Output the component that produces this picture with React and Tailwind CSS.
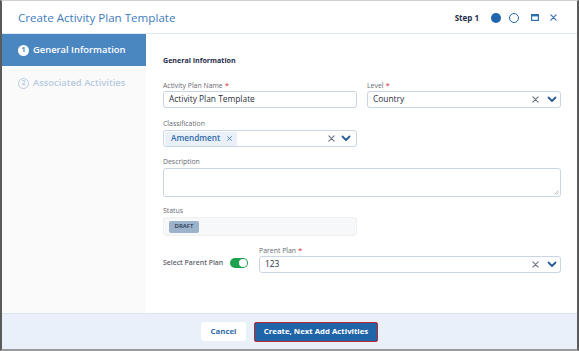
function Chevron() {
  return (
    <svg width="10" height="7" viewBox="0 0 10 7" fill="none">
      <path d="M1.5 1.5 L5 5 L8.5 1.5" stroke="#2b5c96" strokeWidth="1.8" strokeLinecap="round" strokeLinejoin="round" />
    </svg>
  );
}

function Cross({ size = 7, color = "#6b7280" }) {
  return (
    <svg width={size} height={size} viewBox="0 0 8 8" fill="none">
      <path d="M1 1 L7 7 M7 1 L1 7" stroke={color} strokeWidth="1.3" strokeLinecap="round" />
    </svg>
  );
}

function Label({ children, required }) {
  return (
    <div className="text-[6.9px] leading-[9px] text-[#666a71]">
      {children}
      {required && <span className="text-[#e0303a] ml-[2px] text-[8px]">*</span>}
    </div>
  );
}

function SelectBox({ value, className = "" }) {
  return (
    <div className={"h-[17px] border border-[#c9d4e4] rounded-[3px] bg-white flex items-center pl-[5px] pr-[3px] " + className}>
      <div className="flex-1 flex items-center text-[8.4px] text-[#2a2f3a]">{value}</div>
      <div className="flex items-center gap-[8px]">
        <Cross />
        <Chevron />
      </div>
    </div>
  );
}

export default function App() {
  return (
    <div
      className="w-[579px] h-[351px] bg-white flex flex-col border-l-2 border-r-2 border-b-2 border-t border-l-[#5a5a5a] border-r-[#5a5a5a] border-b-[#9a9a9a] border-t-[#d0d0d0] overflow-hidden"
      style={{ fontFamily: '"Open Sans", "Noto Sans", sans-serif' }}
    >
      {/* header */}
      <div className="h-[33px] flex items-center border-b border-[#dfe8f3] pl-[16px] pr-[20px] pt-[1px]">
        <div className="flex-1 text-[11.6px] text-[#3f7dbd]">Create Activity Plan Template</div>
        <div className="flex items-center">
          <span className="text-[8px] font-bold text-[#1f2d4a] mr-[12px]">Step 1</span>
          <span className="w-[10px] h-[10px] rounded-full bg-[#1f66ad] mr-[8px]" />
          <span className="w-[10px] h-[10px] rounded-full border border-[#1f66ad] mr-[12px]" />
          <svg width="8" height="7" viewBox="0 0 8 7" className="mr-[11px]">
            <rect x="0.6" y="0.6" width="6.8" height="5.8" fill="none" stroke="#2f6fb0" strokeWidth="1.2" />
            <rect x="0.6" y="0.6" width="6.8" height="1.8" fill="#2f6fb0" />
          </svg>
          <Cross size={7} color="#2f6fb0" />
        </div>
      </div>

      <div className="flex flex-1 min-h-0">
        {/* sidebar */}
        <div className="w-[144px] bg-[#fafafa] flex flex-col">
          <div className="h-[32px] bg-[#4a87c1] flex items-center pl-[16px] text-white">
            <span className="w-[11px] h-[11px] rounded-full bg-white text-[#4a87c1] text-[7px] font-bold flex items-center justify-center mr-[4px]">1</span>
            <span className="text-[9.4px] font-semibold">General Information</span>
          </div>
          <div className="h-[34px] flex items-center pl-[16px] text-[#b7cbe0]">
            <span className="w-[11px] h-[11px] rounded-full border border-[#b7cbe0] text-[7px] font-bold flex items-center justify-center mr-[4px]">2</span>
            <span className="text-[9.4px] font-semibold">Associated Activities</span>
          </div>
        </div>

        {/* main */}
        <div className="flex-1 pl-[17px] pr-[16px] pt-[21px]">
          <div className="text-[7.1px] leading-[11px] font-bold text-[#1f2d4a]">General Information</div>

          <div className="grid grid-cols-2 gap-x-[10px] mt-[14px]">
            <div>
              <Label required>Activity Plan Name</Label>
              <div className="mt-[1px] h-[17px] border border-[#c9d4e4] rounded-[3px] flex items-center pl-[5px] text-[8.4px] text-[#2a2f3a]">
                Activity Plan Template
              </div>
            </div>
            <div>
              <Label required>Level</Label>
              <SelectBox className="mt-[1px]" value="Country" />
            </div>
          </div>

          <div className="grid grid-cols-2 gap-x-[10px] mt-[11px]">
            <div>
              <Label>Classification</Label>
              <div className="mt-[2px] h-[17px] border border-[#c9d4e4] rounded-[3px] flex items-center pl-[1px] pr-[5px]">
                <div className="flex-1 flex items-center">
                  <span className="h-[14px] w-[72px] bg-[#e9f0f8] rounded-[2px] flex items-center pl-[6px] gap-[7px] text-[8.2px] font-semibold text-[#2f6aa8]">
                    Amendment
                    <Cross size={5} color="#2f6aa8" />
                  </span>
                </div>
                <div className="flex items-center gap-[6px]">
                  <Cross />
                  <Chevron />
                </div>
              </div>
            </div>
            <div />
          </div>

          <div className="mt-[10px]">
            <Label>Description</Label>
            <div className="mt-[2px] h-[29px] border border-[#c9d4e4] rounded-[3px] relative">
              <svg width="5" height="5" viewBox="0 0 5 5" className="absolute right-[1px] bottom-[1px]">
                <path d="M4.5 0.5 L0.5 4.5 M4.5 2.5 L2.5 4.5" stroke="#9aa3ad" strokeWidth="0.7" />
              </svg>
            </div>
          </div>

          <div className="grid grid-cols-2 gap-x-[10px] mt-[9px]">
            <div>
              <Label>Status</Label>
              <div className="mt-[2px] h-[19px] bg-[#f7f8f9] border border-[#eef0f2] rounded-[3px] flex items-center pl-[5px]">
                <span className="h-[12px] w-[30px] bg-[#9db2cb] rounded-[2px] text-[6px] font-semibold text-[#25344d] flex items-center justify-center">DRAFT</span>
              </div>
            </div>
            <div />
          </div>

          <div className="flex mt-[9px]">
            <div className="w-[96px] flex items-end pb-[5px]">
              <span className="text-[6.9px] font-semibold text-[#5f636a] mr-[7px]">Select Parent Plan</span>
              <span className="w-[18px] h-[10px] rounded-full bg-[#1fa04e] relative">
                <span className="absolute right-[1px] top-[1px] w-[8px] h-[8px] rounded-full bg-white" />
              </span>
            </div>
            <div className="flex-1">
              <Label required>Parent Plan</Label>
              <SelectBox className="mt-[1px]" value="123" />
            </div>
          </div>
        </div>
      </div>

      {/* footer */}
      <div className="h-[36px] bg-[#e9f0f9] border-t border-[#d9e4f1] flex items-center justify-center gap-[8px]">
        <button className="h-[19px] w-[45px] bg-white rounded-[3px] text-[7.8px] font-bold text-[#2f6aa8] flex items-center justify-center">
          Cancel
        </button>
        <button className="h-[20px] w-[124px] bg-[#1f65a8] border border-[#c1272d] rounded-[2px] text-[7.8px] font-bold text-white flex items-center justify-center">
          Create, Next Add Activities
        </button>
      </div>
    </div>
  );
}
